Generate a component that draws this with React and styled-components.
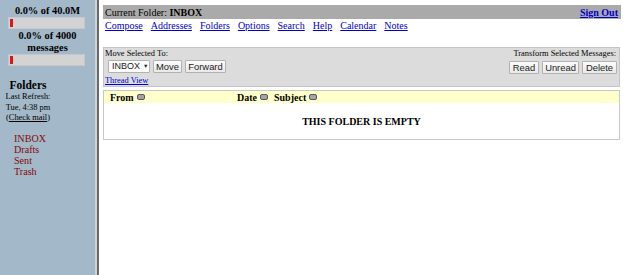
import React from "react";
import styled, { createGlobalStyle } from "styled-components";

const GlobalStyle = createGlobalStyle`
  html, body {
    margin: 0;
    padding: 0;
    background: #ffffff;
  }
  body {
    font-family: "Liberation Serif", "Times New Roman", serif;
    color: #000;
  }
`;

const Page = styled.div`
  display: flex;
  height: 275px;
  overflow: hidden;
`;

const Sidebar = styled.div`
  width: 95px;
  flex: none;
  background: #a3b8c8;
  border-right: 2px solid #cfd3d6;
  padding-top: 5px;
  box-sizing: content-box;
`;

const Divider = styled.div`
  width: 2px;
  flex: none;
  background: #6a6a6a;
`;

const QuotaLabel = styled.div`
  font-weight: bold;
  font-size: 10.4px;
  line-height: 12px;
  text-align: center;
`;

const QuotaBar = styled.div`
  margin: 0 10px 0 8px;
  height: 12px;
  background: #d3d3d3;
  border: 1px solid #c4c8cc;
  box-sizing: border-box;
  display: flex;
  align-items: stretch;
  padding: 1px 0 1px 1px;
  margin-bottom: ${(p) => p.$gap}px;
`;

const QuotaFill = styled.div`
  width: 3px;
  background: #e0141e;
`;

const RefreshBlock = styled.div`
  width: 56px;
  text-align: center;
  margin-top: 13px;
`;

const FoldersTitle = styled.div`
  font-weight: bold;
  font-size: 11.5px;
  line-height: 13px;
`;

const SmallLine = styled.div`
  font-size: 8.4px;
  line-height: 10.5px;
`;

const CheckLink = styled.a`
  color: #000;
  text-decoration: underline;
`;

const FolderList = styled.ul`
  list-style: none;
  margin: 9px 0 0 14px;
  padding: 0;
`;

const FolderItem = styled.li`
  font-size: 10.1px;
  line-height: 11.3px;
  color: #850a0a;
`;

const Main = styled.div`
  flex: 1;
  padding: 5px 2px 0 4px;
  background: #fff;
`;

const TitleBar = styled.div`
  display: flex;
  justify-content: space-between;
  align-items: center;
  height: 14px;
  background: #aaaaaa;
  padding: 0 3px 0 2px;
  font-size: 10px;
`;

const SignOut = styled.a`
  color: #0000cc;
  font-weight: bold;
  text-decoration: underline;
`;

const Nav = styled.div`
  display: flex;
  gap: 8px;
  padding-left: 2px;
  margin-top: 1px;
  height: 12px;
  line-height: 12px;
  font-size: 10px;
`;

const NavLink = styled.a`
  color: #0000cc;
  text-decoration: underline;
`;

const ActionBox = styled.div`
  margin-top: 15px;
  margin-right: 1px;
  height: 40px;
  box-sizing: border-box;
  background: #dcdcdc;
  border: 1px solid #c4c4c4;
  display: flex;
  justify-content: space-between;
  padding: 1px 3px 0 1px;
`;

const ActionColumn = styled.div`
  display: flex;
  flex-direction: column;
  align-items: ${(p) => (p.$right ? "flex-end" : "flex-start")};
`;

const BoxLabel = styled.div`
  font-size: 8.4px;
  line-height: 10px;
  height: 12px;
`;

const Controls = styled.div`
  display: flex;
  gap: 3px;
  margin-left: ${(p) => (p.$indent ? 3 : 0)}px;
  margin-right: ${(p) => (p.$right ? -1 : 0)}px;
`;

const Button = styled.button`
  height: 13px;
  box-sizing: border-box;
  padding: 0 2px;
  font-family: "Liberation Sans", Arial, sans-serif;
  font-size: 9.4px;
  line-height: 11px;
  color: #222;
  background: linear-gradient(#fbfbfb, #e9e9e9);
  border: 1px solid #b2b2b2;
  border-radius: 1px;
  width: ${(p) => p.$w}px;
`;

const Select = styled(Button)`
  display: flex;
  align-items: center;
  gap: 3px;
  padding: 0 0 0 3px;
  font-size: 9px;
  background: #fbfbfb;
`;

const Caret = styled.span`
  font-size: 5.5px;
`;

const ThreadLink = styled.a`
  color: #0000cc;
  font-size: 8.4px;
  line-height: 10px;
  margin-top: 3px;
  text-decoration: underline;
`;

const MessageTable = styled.div`
  margin-top: 3px;
  margin-right: 1px;
  border: 1px solid #c8c8c8;
  height: 50px;
  box-sizing: border-box;
  display: flex;
  flex-direction: column;
`;

const HeaderRow = styled.div`
  display: flex;
  align-items: center;
  height: 12px;
  background: #ffffcc;
  font-weight: bold;
  font-size: 10px;
`;

const HeaderCell = styled.div`
  display: flex;
  align-items: center;
  gap: 3px;
  padding-left: 6px;
  width: ${(p) => (p.$w ? `${p.$w}px` : "auto")};
  box-sizing: border-box;
`;

const SortIcon = styled.span`
  display: inline-block;
  width: 8px;
  height: 6px;
  box-sizing: border-box;
  background: #a4a4a4;
  border: 1px solid #5a5a5a;
  border-radius: 2px;
`;

const EmptyBody = styled.div`
  flex: 1;
  display: flex;
  align-items: center;
  justify-content: center;
  font-weight: bold;
  font-size: 10px;
`;

const folders = ["INBOX", "Drafts", "Sent", "Trash"];
const navItems = [
  "Compose",
  "Addresses",
  "Folders",
  "Options",
  "Search",
  "Help",
  "Calendar",
  "Notes",
];

export default function App() {
  return (
    <Page>
      <GlobalStyle />
      <Sidebar>
        <QuotaLabel>0.0% of 40.0M</QuotaLabel>
        <QuotaBar $gap={1}>
          <QuotaFill />
        </QuotaBar>
        <QuotaLabel>
          0.0% of 4000
          <br />
          messages
        </QuotaLabel>
        <QuotaBar $gap={0}>
          <QuotaFill />
        </QuotaBar>
        <RefreshBlock>
          <FoldersTitle>Folders</FoldersTitle>
          <SmallLine>Last Refresh:</SmallLine>
          <SmallLine>Tue, 4:38 pm</SmallLine>
          <SmallLine>
            (<CheckLink>Check mail</CheckLink>)
          </SmallLine>
        </RefreshBlock>
        <FolderList>
          {folders.map((f) => (
            <FolderItem key={f}>{f}</FolderItem>
          ))}
        </FolderList>
      </Sidebar>
      <Divider />
      <Main>
        <TitleBar>
          <span>
            Current Folder: <b>INBOX</b>
          </span>
          <SignOut>Sign Out</SignOut>
        </TitleBar>
        <Nav>
          {navItems.map((n) => (
            <NavLink key={n}>{n}</NavLink>
          ))}
        </Nav>
        <ActionBox>
          <ActionColumn>
            <BoxLabel>Move Selected To:</BoxLabel>
            <Controls $indent>
              <Select $w={42}>
                INBOX<Caret>▼</Caret>
              </Select>
              <Button $w={29}>Move</Button>
              <Button $w={41}>Forward</Button>
            </Controls>
            <ThreadLink>Thread View</ThreadLink>
          </ActionColumn>
          <ActionColumn $right>
            <BoxLabel>Transform Selected Messages:</BoxLabel>
            <Controls $right>
              <Button $w={30}>Read</Button>
              <Button $w={37}>Unread</Button>
              <Button $w={35}>Delete</Button>
            </Controls>
          </ActionColumn>
        </ActionBox>
        <MessageTable>
          <HeaderRow>
            <HeaderCell $w={127}>
              From <SortIcon />
            </HeaderCell>
            <HeaderCell>
              Date <SortIcon />
            </HeaderCell>
            <HeaderCell>
              Subject <SortIcon />
            </HeaderCell>
          </HeaderRow>
          <EmptyBody>THIS FOLDER IS EMPTY</EmptyBody>
        </MessageTable>
      </Main>
    </Page>
  );
}
